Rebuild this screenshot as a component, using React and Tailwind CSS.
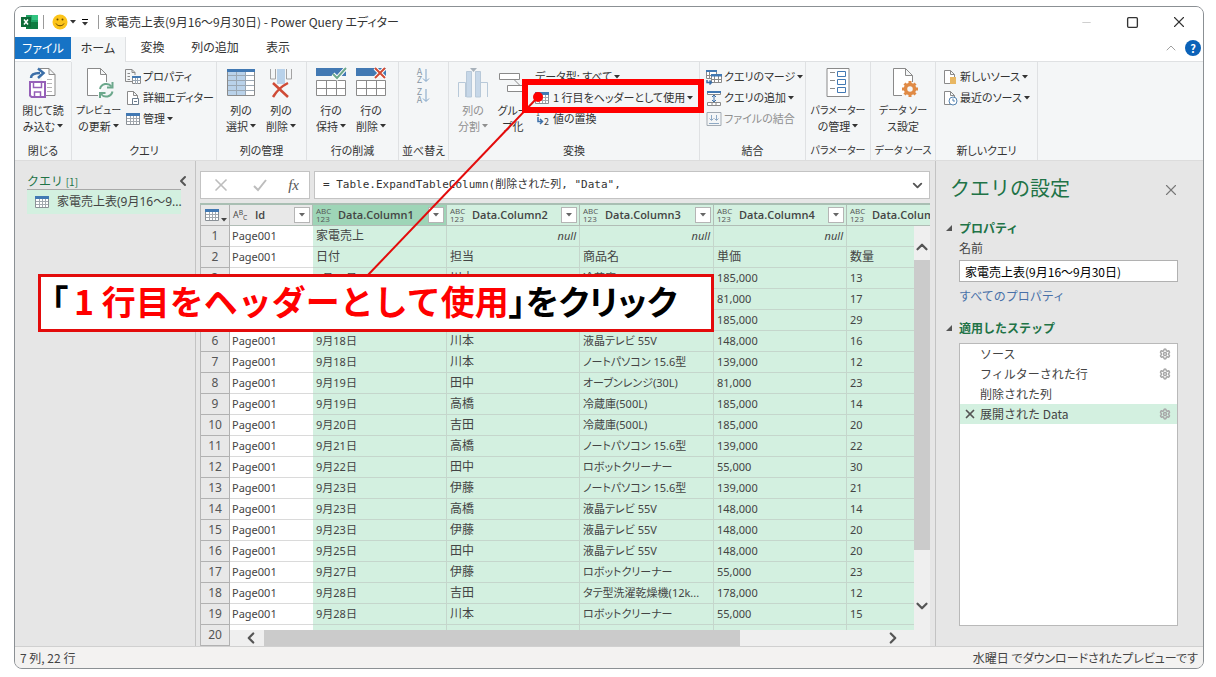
import clsx from 'clsx';
import { ChevronDown, ChevronLeft, ChevronRight, ChevronUp, Minus, Settings, Square, X } from 'lucide-react';

const LOAD_ICON = (
  <svg viewBox="0 0 30 32" className="h-8 w-[30px]" fill="none">
    <path d="M12 2.500h9l6 6V29.500H17M21 2.500v6h6" fill="#fff" stroke="#8a8a8a" />
    <path d="M19 13.500h5M19 17.500h5M19 21.500h5M19 25.500h5" stroke="#b5b5b5" />
    <path d="M3 12c0-4 4-5 9-5" stroke="#3c6fa8" strokeWidth="2.500" />
    <path d="M10 2.500l5.500 4.500L10 12" stroke="#3c6fa8" strokeWidth="2.500" />
    <path d="M2 16h15v15H3.500L2 29.500z" fill="#fff" stroke="#9660b8" strokeWidth="2" />
    <path d="M5.500 16v5.500h8V16M6.500 31v-5h6v5" stroke="#9660b8" strokeWidth="1.500" />
  </svg>
);

const REFRESH_ICON = (
  <svg viewBox="0 0 30 32" className="h-8 w-[30px]" fill="none">
    <path d="M14 29.500H3.500v-27h13l6 6V16M16.500 2.500v6h6" fill="#fff" stroke="#8a8a8a" />
    <path d="M16 23a6.500 6.500 0 0 1 11.500-2.500M28.500 25.500A6.500 6.500 0 0 1 17 28" stroke="#6ca88c" strokeWidth="2" />
    <path d="M28.500 16v5.500H23M16 32.500V27h5.500" stroke="#6ca88c" strokeWidth="2" />
  </svg>
);

const CHOOSE_COLUMNS_ICON = (
  <svg viewBox="0 0 28 32" className="h-8 w-7" fill="none">
    <path d="M.5 3.500h27v26H.5z" fill="#fff" stroke="#8a8a8a" />
    <path d="M1 6h17.500v23H1z" fill="#b9d2ea" />
    <path d="M0 3h28v3H0z" fill="#4279b3" />
    <path d="M1 9.500h26M1 14.500h26M1 19.500h26M1 24.500h26M9.500 6v23M18.500 6v23" stroke="#9aa7b3" />
  </svg>
);

const REMOVE_COLUMNS_ICON = (
  <svg viewBox="0 0 28 32" className="h-8 w-7" fill="none">
    <path d="M3.500 3v10h5V3M19.500 3v10h5V3" stroke="#a3a3a3" />
    <path d="M10 3h8v15h-8z" fill="#b9d2ea" />
    <path d="M6 17l15 14M21 17C15 20 9 26 6 31" stroke="#cf4b36" strokeWidth="2.500" />
  </svg>
);

function RowsIcon({ keep }) {
  return (
    <svg viewBox="0 0 31 32" className="h-8 w-[31px]" fill="none">
      <path d="M.5 14.500h29v15H.5z" fill="#fff" />
      <path d="M0 2h30v8H0z" fill="#4279b3" />
      <path d="M.5 14.500h29v15H.5zM.5 22.500h29M10.500 14.500v15M20.500 14.500v15" stroke="#8a8a8a" />
      {keep ? (
        <g>
          <path d="M17 8l4 4L30 2" stroke="#fff" strokeWidth="4" />
          <path d="M17 8l4 4L30 2" stroke="#6ca88c" strokeWidth="2" />
        </g>
      ) : (
        <g>
          <path d="M19 2l10 10M29 2L19 12" stroke="#fff" strokeWidth="4" />
          <path d="M19 2l10 10M29 2L19 12" stroke="#cf4b36" strokeWidth="2" />
        </g>
      )}
    </svg>
  );
}

const SPLIT_ICON = (
  <svg viewBox="0 0 30 32" className="h-8 w-[30px]" fill="none">
    <path d="M12 2h7l-3.500 4z" fill="#a8b2bb" />
    <path d="M.5 31V16.500h7V31M22.500 31V16.500h7V31" stroke="#b8c9d9" />
    <path d="M8.500 31V5.500h5V31zM17.500 31V5.500h5V31z" fill="#c6d7e8" stroke="#b8c9d9" />
  </svg>
);

const GROUP_ICON = (
  <svg viewBox="0 0 30 32" className="h-8 w-[30px]" fill="none" stroke="#8a8a8a">
    <path d="M1.500 7.500h20v6h-20zM9.500 19.500h20v6h-20z" fill="#fff" />
    <path d="M16 13.500l6 6" />
  </svg>
);

const PARAMS_ICON = (
  <svg viewBox="0 0 24 32" className="h-8 w-6" fill="none">
    <path d="M1 2.500h22v28H1z" fill="#fff" stroke="#8a8a8a" />
    <path d="M4 6.500h5M4 14.500h5M4 22.500h5" stroke="#8a8a8a" />
    <path d="M11.500 5.500h8v5h-8zM11.500 13.500h8v5h-8zM11.500 21.500h8v5h-8z" stroke="#4279b3" />
  </svg>
);

const SOURCE_SETTINGS_ICON = (
  <svg viewBox="0 0 30 32" className="h-8 w-[30px]" fill="none">
    <path d="M14 29.500H5.500v-27h12l7 7V16M17.500 2.500v7h7" fill="#fff" stroke="#8a8a8a" />
    <g stroke="#e08a45" strokeWidth="3">
      <circle cx="22" cy="23" r="4.500" strokeWidth="3.500" />
      <path d="M22 15v3M22 28v3M14 23h3M27 23h3M16.500 17.500l2 2M25.500 26.500l2 2M27.500 17.500l-2 2M18.500 26.500l-2 2" />
    </g>
  </svg>
);

function TableIcon({ className }) {
  return (
    <svg viewBox="0 0 14 14" className={className} fill="none">
      <path d="M.5 1.500h13v11H.5z" fill="#fff" stroke="#8a9096" />
      <path d="M1 6.500h12M1 9.500h12M4.500 4v8M7.500 4v8M10.500 4v8" stroke="#a3a9af" />
      <path d="M0 1h14v3H0z" fill="#4279b3" />
    </svg>
  );
}

function PageIcon({ children }) {
  return (
    <svg viewBox="0 0 16 16" className="size-4 shrink-0" fill="none">
      <path d="M9 14.500H2.500v-13h6l4 4V8M8.500 1.500v4h4" fill="#fff" stroke="#8a8a8a" />
      {children}
    </svg>
  );
}

const PROPERTIES_ICON = (
  <svg viewBox="0 0 16 16" className="size-4 shrink-0" fill="none">
    <path d="M7 12.500H.5V.5H7l3 3V6M7 .5v3h3M2.500 4.500H5M2.500 7.500H5M2.500 10.500H5" stroke="#8a8a8a" />
    <path d="M7.500 7.500h8v7h-8z" fill="#fff" stroke="#8a8a8a" />
    <path d="M7.500 11.500h8M10.500 9v6M12.500 9v6" stroke="#9aa7b3" />
    <path d="M7 7h9v2H7z" fill="#4279b3" />
  </svg>
);

const MERGE_ICON = (
  <svg viewBox="0 0 16 16" className="size-4 shrink-0" fill="none">
    <path d="M.5 1.500h10v8H.5zM.5 6.500h5M3.500 3v6" fill="#fff" stroke="#8a8a8a" />
    <path d="M0 1h11v2H0z" fill="#4279b3" />
    <path d="M5.500 5.500h10v8h-10zM5.500 10.500h10M8.500 7v7M12.500 7v7" fill="#fff" stroke="#8a8a8a" />
    <path d="M5 5h11v2.500H5z" fill="#4279b3" />
    <path d="M1 11v2.500h4M3.500 11.500l2 2-2 2" stroke="#3c6fa8" strokeWidth="1.500" />
  </svg>
);

const APPEND_ICON = (
  <svg viewBox="0 0 16 16" className="size-4 shrink-0" fill="none">
    <path d="M1.500 1.500h13v3h-13zM1.500 12.500h13v3h-13zM6 12.500v3M10 12.500v3" fill="#fff" stroke="#8a8a8a" />
    <path d="M1 1h14v2H1z" fill="#4279b3" />
    <path d="M8 5v7M6 7l2-2 2 2M6 10l2 2 2-2" stroke="#3c6fa8" />
  </svg>
);

const COMBINE_ICON = (
  <svg viewBox="0 0 16 16" className="size-4 shrink-0" fill="none" stroke="#8ea9c4">
    <path d="M1 1.500h14v13H1z" stroke="#a3abb3" />
    <path d="M5.500 4v5M3.500 7.500l2 2 2-2M10.500 4v5M8.500 7.500l2 2 2-2M3 12.500h10" />
  </svg>
);

const REPLACE_ICON = (
  <svg viewBox="0 0 16 16" className="size-4 shrink-0" fill="none">
    <path d="M3 6v4.500h4M5 8l2.500 2.500L5 13" stroke="#3c6fa8" strokeWidth="1.500" />
    <text x="1" y="5" fontSize="7" fill="#444">1</text>
    <text x="9" y="14" fontSize="9" fill="#444">2</text>
  </svg>
);

const rows = [
  ['家電売上', null, null, null, ''],
  ['日付', '担当', '商品名', '単価', '数量'],
  ['9月16日', '川本', '冷蔵庫(500L)', '185,000', '13'],
  ['9月16日', '田中', 'オーブンレンジ(30L)', '81,000', '17'],
  ['9月17日', '高橋', '冷蔵庫(500L)', '185,000', '29'],
  ['9月18日', '川本', '液晶テレビ 55V', '148,000', '16'],
  ['9月18日', '川本', 'ノートパソコン 15.6型', '139,000', '12'],
  ['9月19日', '田中', 'オーブンレンジ(30L)', '81,000', '23'],
  ['9月19日', '高橋', '冷蔵庫(500L)', '185,000', '14'],
  ['9月20日', '吉田', '冷蔵庫(500L)', '185,000', '20'],
  ['9月21日', '高橋', 'ノートパソコン 15.6型', '139,000', '22'],
  ['9月22日', '田中', 'ロボットクリーナー', '55,000', '30'],
  ['9月23日', '伊藤', 'ノートパソコン 15.6型', '139,000', '21'],
  ['9月23日', '高橋', '液晶テレビ 55V', '148,000', '14'],
  ['9月23日', '伊藤', '液晶テレビ 55V', '148,000', '20'],
  ['9月25日', '田中', '液晶テレビ 55V', '148,000', '20'],
  ['9月27日', '伊藤', 'ロボットクリーナー', '55,000', '23'],
  ['9月28日', '吉田', 'タテ型洗濯乾燥機(12k...', '178,000', '12'],
  ['9月28日', '川本', 'ロボットクリーナー', '55,000', '15'],
  ['', '', '', '', ''],
];

const steps = [
  { name: 'ソース', gear: true },
  { name: 'フィルターされた行', gear: true },
  { name: '削除された列', gear: false },
  { name: '展開された Data', gear: true, active: true },
];

function Caret({ className }) {
  return (
    <svg viewBox="0 0 6 4" className={clsx('inline-block h-1 w-1.5 shrink-0', className)} fill="currentColor">
      <path d="M0 0h6L3 3.500z" />
    </svg>
  );
}

function Group({ label, narrow, className, children }) {
  return (
    <div className={clsx('flex shrink-0 flex-col border-r border-[#dfe1e3] pt-1', className)}>
      <div className="flex flex-1 items-start">{children}</div>
      <div className={clsx('pb-0.5 text-center leading-4 whitespace-nowrap', narrow && 'text-[10px]')}>{label}</div>
    </div>
  );
}

function BigButton({ icon, lines, caret, disabled, narrow, className }) {
  return (
    <button disabled={disabled} className={clsx('flex flex-col items-center leading-4 whitespace-nowrap', disabled && 'text-[#8f8f8f]', className)}>
      {icon}
      <span className={clsx('mt-1', narrow && 'text-[10px]')}>{lines[0]}</span>
      <span className="flex items-center gap-0.5">
        {lines[1]}
        {caret && <Caret />}
      </span>
    </button>
  );
}

function SmallButton({ icon, label, caret, disabled }) {
  return (
    <button disabled={disabled} className={clsx('flex h-[21px] items-center gap-0.5 whitespace-nowrap', disabled && 'text-[#8f8f8f]')}>
      {icon}
      {label}
      {caret && <Caret />}
    </button>
  );
}

function TitleBar() {
  return (
    <div className="flex h-[30px] shrink-0 items-center bg-white pl-1.5">
      <svg viewBox="0 0 18 16" className="h-4 w-[18px]">
        <path d="M5 1h12v14H5z" fill="#21a366" />
        <path d="M11 1h6v5h-6z" fill="#33c481" />
        <path d="M5 8h12v7H5z" fill="#107c41" />
        <path d="M0 3h10v10H0z" fill="#0e6b38" />
        <path d="M3 5.500l4 5M7 5.500l-4 5" stroke="#fff" strokeWidth="1.500" />
      </svg>
      <span className="mx-1 h-3.5 w-px bg-[#9a9a9a]" />
      <button aria-label="フィードバック" className="ml-1 flex items-center">
        <svg viewBox="0 0 16 16" className="size-4">
          <circle cx="8" cy="8" r="7.500" fill="#fcc419" />
          <circle cx="5.500" cy="5.500" r="1" fill="#6b4a00" />
          <circle cx="10.500" cy="5.500" r="1" fill="#6b4a00" />
          <path d="M4 9.500c1.500 3 6.500 3 8 0" fill="none" stroke="#6b4a00" />
        </svg>
        <Caret className="ml-0.5" />
      </button>
      <button aria-label="クイック アクセス" className="ml-1.5 flex flex-col items-center gap-0.5">
        <span className="h-px w-1.5 bg-black" />
        <Caret />
      </button>
      <span className="mr-1.5 ml-2.5 h-3.5 w-px bg-[#9a9a9a]" />
      <h1 className="text-xs [font-feature-settings:'palt']">家電売上表(9月16～9月30日) - Power Query エディター</h1>
      <div className="ml-auto flex items-center">
        <button aria-label="最小化" className="flex w-[46px] justify-center text-[#c4c4c4]"><Minus size={13} strokeWidth={1.5} /></button>
        <button aria-label="最大化" className="flex w-[46px] justify-center"><Square size={13} strokeWidth={2.5} /></button>
        <button aria-label="閉じる" className="flex w-12 justify-center"><X size={18} strokeWidth={1.5} /></button>
      </div>
    </div>
  );
}

function Tabs() {
  return (
    <nav className="flex h-[25px] shrink-0 items-stretch border-b border-[#dfe1e3] bg-white text-xs [font-feature-settings:'palt']">
      <button className="mb-0.5 w-14 bg-[#1673c5] text-white">ファイル</button>
      <button className="-mb-px w-[55px] border-r border-[#dfe1e3] bg-[#f4f6f7] pb-1">ホーム</button>
      <button className="w-[53px] pb-1">変換</button>
      <button className="w-[72px] pb-1">列の追加</button>
      <button className="w-[54px] pb-1">表示</button>
      <div className="ml-auto flex items-center gap-1.5 pr-0.5 pb-0.5">
        <button aria-label="リボンを折りたたむ" className="text-[#a0a0a0]"><ChevronUp size={16} strokeWidth={1.5} /></button>
        <button aria-label="ヘルプ" className="size-4 rounded-full bg-[#0b62b8] text-[11px] leading-4 font-bold text-white">?</button>
      </div>
    </nav>
  );
}

function Ribbon() {
  return (
    <div className="flex h-[99px] shrink-0 overflow-hidden border-b border-[#dcdcdc] bg-[#f4f6f7] text-[11px] text-[#333] [font-feature-settings:'palt']">
      <Group label="閉じる" className="w-[57px]">
        <BigButton icon={LOAD_ICON} lines={['閉じて読', 'み込む']} caret className="w-full" />
      </Group>
      <Group label="クエリ" className="w-[145px]">
        <BigButton icon={REFRESH_ICON} lines={['プレビュー', 'の更新']} caret narrow className="w-[53px]" />
        <div>
          <SmallButton icon={PROPERTIES_ICON} label="プロパティ" />
          <SmallButton icon={<PageIcon><path d="M7.500 8.500h6v6h-6zM9 11.500h3" fill="#fff" stroke="#6b7c8c" /></PageIcon>} label="詳細エディター" />
          <SmallButton icon={<TableIcon className="mx-px size-3.5" />} label="管理" caret />
        </div>
      </Group>
      <Group label="列の管理" className="w-[90px]">
        <BigButton icon={CHOOSE_COLUMNS_ICON} lines={['列の', '選択']} caret className="ml-1 w-10" />
        <BigButton icon={REMOVE_COLUMNS_ICON} lines={['列の', '削除']} caret className="w-10" />
      </Group>
      <Group label="行の削減" className="w-[92px]">
        <BigButton icon={<RowsIcon keep />} lines={['行の', '保持']} caret className="ml-1 w-10" />
        <BigButton icon={<RowsIcon />} lines={['行の', '削除']} caret className="w-10" />
      </Group>
      <Group label="並べ替え" className="w-[50px]">
        <div className="flex w-full flex-col items-center gap-1 pt-0.5">
          {['AZ', 'ZA'].map((s) => (
            <button key={s} aria-label={s === 'AZ' ? '昇順で並べ替え' : '降順で並べ替え'} className="flex items-center text-[9px] leading-[8px] text-[#8796a5]">
              <span className="flex flex-col"><span>{s[0]}</span><span>{s[1]}</span></span>
              <svg viewBox="0 0 8 16" className="h-4 w-2" fill="none" stroke="#7fa3c7"><path d="M4 1v12M1 10.500l3 3 3-3" /></svg>
            </button>
          ))}
        </div>
      </Group>
      <Group label="変換" className="w-[251px]">
        <BigButton icon={SPLIT_ICON} lines={['列の', '分割']} caret disabled className="ml-1 w-10" />
        <BigButton icon={GROUP_ICON} lines={['グルー', 'プ化']} className="w-10" />
        <div className="pl-0.5">
          <SmallButton label="データ型: すべて" caret />
          <SmallButton icon={<TableIcon className="mr-0.5 size-3.5" />} label="1 行目をヘッダーとして使用" caret />
          <SmallButton icon={REPLACE_ICON} label="値の置換" />
        </div>
      </Group>
      <Group label="結合" className="w-[106px]">
        <div className="pl-1.5">
          <SmallButton icon={MERGE_ICON} label="クエリのマージ" caret />
          <SmallButton icon={APPEND_ICON} label="クエリの追加" caret />
          <SmallButton icon={COMBINE_ICON} label="ファイルの結合" disabled />
        </div>
      </Group>
      <Group label="パラメーター" narrow className="w-[65px]">
        <BigButton icon={PARAMS_ICON} lines={['パラメーター', 'の管理']} caret narrow className="w-full" />
      </Group>
      <Group label="データ ソース" narrow className="w-[65px]">
        <BigButton icon={SOURCE_SETTINGS_ICON} lines={['データ ソー', 'ス設定']} narrow className="w-full" />
      </Group>
      <Group label="新しいクエリ" className="w-[102px]">
        <div className="pl-1.5">
          <SmallButton icon={<PageIcon><path d="M8 8h6v7H8z" fill="#e8b763" /></PageIcon>} label="新しいソース" caret />
          <SmallButton icon={<PageIcon><circle cx="11" cy="11" r="4" fill="#fff" stroke="#5583b0" /><path d="M11 8.500V11h2" stroke="#5583b0" /></PageIcon>} label="最近のソース" caret />
        </div>
      </Group>
    </div>
  );
}

function QueryPane() {
  return (
    <aside className="w-[181px] shrink-0 border-r border-[#c3c3c3] pt-[11px] pr-3.5 pl-3">
      <div className="flex h-[18px] items-center justify-between border-b border-[#a8a8a8] text-xs text-[#217346]">
        <h2>クエリ <span className="text-[10px]">[1]</span></h2>
        <button aria-label="折りたたむ" className="-mr-2.5 text-[#555]"><ChevronLeft size={16} strokeWidth={3} /></button>
      </div>
      <button className="flex h-6 w-full items-center gap-2 bg-[#d3f0e0] pl-2 text-left text-xs text-[#444] [font-family:'Noto_Sans','Noto_Sans_CJK_JP',sans-serif]">
        <TableIcon className="size-3.5 shrink-0" />
        <span className="whitespace-nowrap">家電売上表(9月16～9...</span>
      </button>
    </aside>
  );
}

function TypeMark() {
  return (
    <span className="flex w-[18px] shrink-0 flex-col text-[8px] leading-[8px] font-medium text-[#555]">
      <span>ABC</span>
      <span>123</span>
    </span>
  );
}

function HeaderCell({ name, active, text }) {
  return (
    <th
      className={clsx(
        'border-r border-b border-[#b1bdb6] p-0 font-semibold',
        text && 'bg-[#e8e8e8]',
        active && 'bg-[#9ed5b7]',
        !text && !active && 'bg-[#d3f0e0]'
      )}
    >
      <div className="flex items-center gap-1 pr-0.5 pl-[3px] [font-family:'Open_Sans',sans-serif]">
        {text ? (
          <span className="w-[18px] text-[9px] leading-4 font-medium whitespace-nowrap">A<sup>B</sup><sub>C</sub></span>
        ) : <TypeMark />}
        <span>{name}</span>
        <button aria-label={`${name} のフィルター`} className="ml-auto flex size-4 shrink-0 items-center justify-center border border-[#b5b5b5] bg-white text-[#666]">
          <Caret />
        </button>
      </div>
    </th>
  );
}

function DataGrid() {
  return (
    <div className="relative min-h-0 flex-1 overflow-hidden border-t-2 border-[#a9bfb3]">
      <table className="h-full w-[780px] table-fixed border-separate border-spacing-0 border-l border-[#b5b5b5] text-left text-[11px] leading-4 text-[#444] [font-family:'Noto_Sans','Noto_Sans_CJK_JP',sans-serif]">
        <colgroup>
          <col className="w-[29px]" />
          <col className="w-[83px]" />
          <col className="w-[134px]" />
          <col className="w-[133px]" />
          <col className="w-[134px]" />
          <col className="w-[133px]" />
          <col className="w-[133px]" />
        </colgroup>
        <thead>
          <tr className="h-[21px]">
            <th className="border-r border-b border-[#b1b1b1] bg-[#e8e8e8] p-0">
              <button aria-label="テーブル" className="flex items-end pl-1">
                <TableIcon className="size-3.5" />
                <Caret className="ml-0.5" />
              </button>
            </th>
            <HeaderCell name="Id" text />
            <HeaderCell name="Data.Column1" active />
            <HeaderCell name="Data.Column2" />
            <HeaderCell name="Data.Column3" />
            <HeaderCell name="Data.Column4" />
            <HeaderCell name="Data.Column5" />
          </tr>
        </thead>
        <tbody>
          {rows.map((row, i) => (
            <tr key={i}>
              <th className="border-r border-b border-[#b1b1b1] bg-[#e8e8e8] p-0 text-center text-xs leading-4 font-normal text-[#555]">{i + 1}</th>
              <td className="border-b border-[#dadada] bg-white p-0 pl-0.5">{i < 19 && 'Page001'}</td>
              {row.map((value, c) => (
                <td
                  key={c}
                  className={clsx(
                    "truncate border-r border-b border-[#c5d6cc] bg-[#d3f0e0] p-0 px-[3px] [font-feature-settings:'palt']",
                    (c === 1 || i < 2) && value !== null && 'text-xs leading-4',
                    value === null && 'text-right italic'
                  )}
                >
                  {value === null ? 'null' : value}
                </td>
              ))}
            </tr>
          ))}
        </tbody>
      </table>

      <div className="absolute top-[21px] right-0 bottom-4 flex w-4 flex-col items-center bg-[#efefef] text-[#555]">
        <button aria-label="上へ" className="flex h-[34px] items-center pt-2"><ChevronUp size={18} strokeWidth={3} /></button>
        <div className="w-full flex-1 bg-[#cbcbcb]" />
        <button aria-label="下へ" className="flex h-20 items-center pt-8"><ChevronDown size={18} strokeWidth={3} /></button>
      </div>
      <div className="absolute right-0 bottom-0 left-[30px] flex h-4 items-center bg-[#efefef] text-[#555]">
        <button aria-label="左へ" className="pr-1 pl-3"><ChevronLeft size={18} strokeWidth={3} /></button>
        <div className="h-full flex-1 bg-[#cbcbcb]" />
        <button aria-label="右へ" className="flex w-[190px] justify-end pr-7"><ChevronRight size={18} strokeWidth={3} /></button>
      </div>
    </div>
  );
}

function Editor() {
  return (
    <main className="flex min-w-0 flex-1 flex-col pr-[5px] pl-1">
      <div className="mt-2.5 mb-1 flex h-7 shrink-0 gap-1">
        <div className="flex w-[110px] items-center justify-between border border-[#c3c3c3] bg-white px-2.5 text-[#bdbdbd]">
          <button aria-label="キャンセル"><X size={20} strokeWidth={2} /></button>
          <button aria-label="確定">
            <svg viewBox="0 0 16 16" className="size-4" fill="none" stroke="currentColor" strokeWidth="2"><path d="M2 9l4 4 8-10" /></svg>
          </button>
          <button aria-label="関数" className="text-[15px] text-[#555] italic [font-family:'Liberation_Serif',serif]">fx</button>
        </div>
        <div className="flex min-w-0 flex-1 items-center border border-[#c3c3c3] bg-white pr-1 pl-2">
          <input
            aria-label="数式"
            defaultValue={'= Table.ExpandTableColumn(削除された列, "Data",'}
            className="min-w-0 flex-1 text-[11px] text-[#333] outline-none [font-family:'DejaVu_Sans_Mono','Noto_Sans_CJK_JP',monospace]"
          />
          <button aria-label="展開" className="text-[#555]"><ChevronDown size={15} strokeWidth={3} /></button>
        </div>
      </div>
      <DataGrid />
    </main>
  );
}

function SectionTitle({ children }) {
  return (
    <h3 className="flex items-center gap-1.5 text-xs leading-5 font-bold text-[#217346]">
      <svg viewBox="0 0 7 7" className="size-[7px]"><path d="M6 0v6H0z" fill="#555" /></svg>
      {children}
    </h3>
  );
}

function SettingsPane() {
  return (
    <aside className="flex w-[268px] shrink-0 flex-col border-l border-[#c3c3c3] pr-[25px] pb-5 pl-2.5 text-xs text-[#444]">
      <div className="flex h-[57px] items-center justify-between pl-1">
        <h2 className="pb-1 text-xl text-[#217346]">クエリの設定</h2>
        <button aria-label="閉じる" className="-mr-0.5 text-[#777]"><X size={18} strokeWidth={1.5} /></button>
      </div>
      <SectionTitle>プロパティ</SectionTitle>
      <div className="flex flex-col items-start pl-[13px]">
        <label htmlFor="query-name" className="leading-5">名前</label>
        <input id="query-name" defaultValue="家電売上表(9月16～9月30日)" className="mt-0.5 h-[22px] w-full border border-[#b1b1b1] bg-white px-[5px] text-black outline-none [font-feature-settings:'palt']" />
        <a href="#properties" className="mt-1 leading-5 text-[#4870a8]">すべてのプロパティ</a>
      </div>
      <div className="mt-3">
        <SectionTitle>適用したステップ</SectionTitle>
      </div>
      <ul className="mt-[5px] ml-[13px] flex-1 border border-[#b9b9b9] bg-white">
        {steps.map((step) => (
          <li key={step.name} className={clsx('flex h-5 items-center pr-1.5', step.active && 'bg-[#d3f0e0]')}>
            <button aria-label="削除" className="flex w-5 justify-center text-[#555]">{step.active && <X size={14} strokeWidth={3} />}</button>
            <button className="flex-1 text-left">{step.name}</button>
            {step.gear && <button aria-label="設定" className="text-[#a8a8a8]"><Settings size={12} strokeWidth={3} /></button>}
          </li>
        ))}
      </ul>
    </aside>
  );
}

// red callout drawn over the window
function Annotation() {
  return (
    <div className="pointer-events-none absolute inset-0">
      <svg className="absolute inset-0 size-full">
        <path d="M538 97L367 276" stroke="#e30b0b" strokeWidth="2" />
        <circle cx="538" cy="97" r="5" fill="#f00" />
      </svg>
      <div className="absolute top-[79px] left-[522px] h-[34px] w-[182px] border-6 border-[#f00]" />
      <p className="absolute top-[274px] left-[38px] flex h-[58px] w-[676px] items-center border-3 border-[#e30b0b] bg-white pb-1 pl-2.5 text-[34px] leading-none font-bold whitespace-nowrap text-black">
        <span className="[font-feature-settings:'palt']">「</span>
        <span className="ml-1.5 text-[#f00]">1 行目をヘッダーとして使用</span>
        <span className="[font-feature-settings:'palt']">」をクリック</span>
      </p>
    </div>
  );
}

export default function App() {
  return (
    <div className="relative h-screen bg-white pt-1.5 pr-3 pb-2 pl-3.5 text-[#333] [font-family:'Noto_Sans_CJK_JP',sans-serif]">
      <div className="flex h-full flex-col overflow-hidden rounded-lg border border-[#8b9094] bg-[#e6e6e6]">
        <TitleBar />
        <Tabs />
        <Ribbon />
        <div className="flex min-h-0 flex-1">
          <QueryPane />
          <Editor />
          <SettingsPane />
        </div>
        <footer className="flex h-[22px] shrink-0 items-center justify-between border-t border-[#d0d0d0] bg-[#f3f2f1] px-[5px] text-xs text-[#444] [font-feature-settings:'palt']">
          <span>7 列, 22 行</span>
          <span>水曜日 でダウンロードされたプレビューです</span>
        </footer>
      </div>
      <Annotation />
    </div>
  );
}
